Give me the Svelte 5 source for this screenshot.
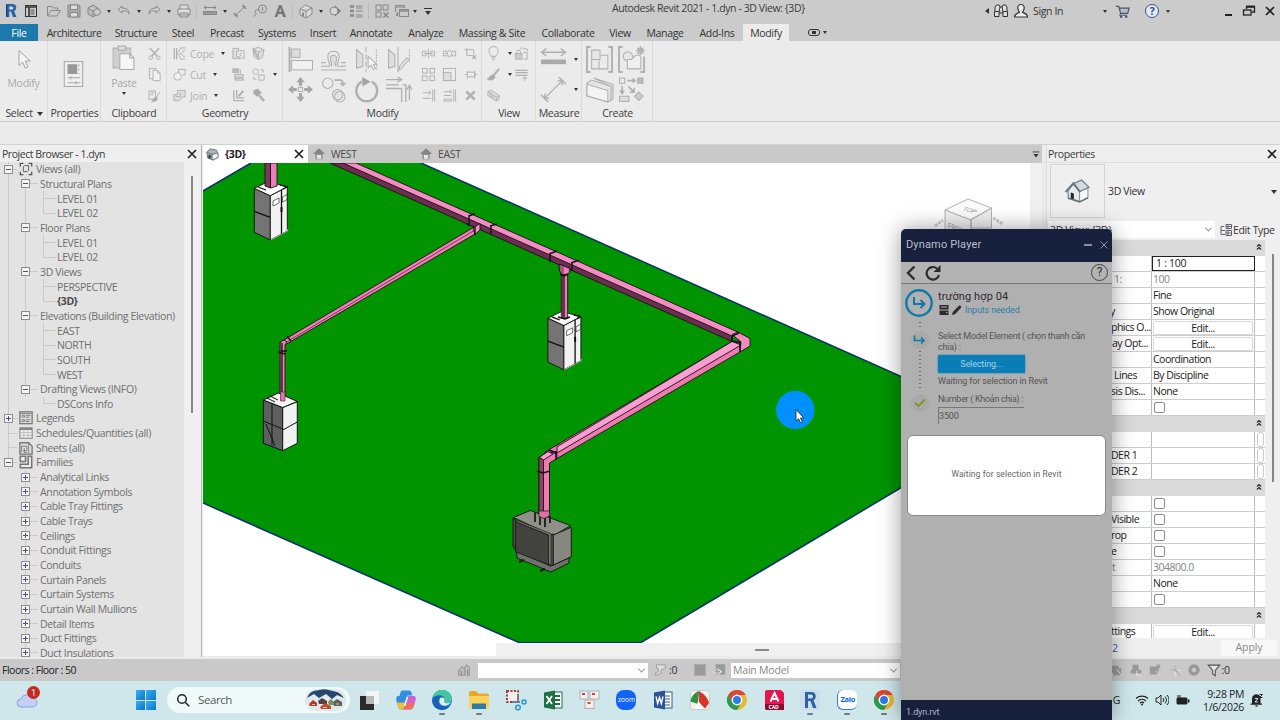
<script>
  const I = {
    // quick access
    revit: '<path d="M3 1h6.5a3.6 3.6 0 0 1 1.6 6.9L13.5 14H10L8 8.6H6.3V14H3z" fill="#2a63a8" stroke="none"/><path d="M6.3 3.4h2.5a1.4 1.4 0 0 1 0 3H6.3z" fill="#cbd9ea" stroke="none"/><path d="M3 1l1.2 2v11H3z" fill="#173f73" stroke="none"/>',
    home: '<rect x="2.5" y="2.5" width="11" height="11" stroke="#333"/><path d="M2.5 4h11M6 4v9" stroke="#333" stroke-width="1.6"/><path d="M7.5 7h4M7.5 9h4M7.5 11h4" stroke="#555"/>',
    open: '<path d="M1.500 13V3.500h4l1 1.500h5v2.500M1.500 13l3.500-5.500h9.500L11 13z"/>',
    save: '<path d="M2 2h11l1 1v11H2z" fill="#aaa"/><rect x="4.500" y="2" width="7" height="4.500" fill="#ddd"/><rect x="4.500" y="9.500" width="7" height="4.500" fill="#ddd"/>',
    sync: '<path d="M2 5l5-3 5 3v6l-5 3-5-3zM2 5l5 3 5-3M7 8v6" fill="#bbb"/><circle cx="11" cy="9" r="3.300" fill="#ccc"/>',
    undo: '<path d="M6 3L2 6.500 6 10V8c4-.5 6 0 7 3 .3-4-2-6-7-6z"/>',
    redo: '<path d="M10 3l4 3.500L10 10V8c-4-.5-6 0-7 3-.3-4 2-6 7-6z"/>',
    print: '<path d="M4 6V2h8v4M2 6h12v6H2zM4 10h8v4H4z" fill="#ddd"/>',
    ruler: '<path d="M2 4.500h12M4 2.800L2 4.500l2 1.700M12 2.800l2 1.700-2 1.700"/><rect x="1.500" y="8.500" width="13" height="3" fill="#999"/>',
    dim: '<path d="M3 13L13 3M1.500 10l4 4.500M10.500 1.500l4 4.500M3 13l.5-3M3 13l3-.5M13 3l-3 .5M13 3l-.5 3"/>',
    tag: '<circle cx="10.500" cy="6" r="4"/><path d="M10.500 4v4M6.500 7C3 6 2 9 4.500 11l-3 2.500"/>',
    text: '<path d="M2.500 14L7 2h2.500L14 14h-3l-1-3H6.200l-.9 3zM7 8.800h2.500L8.200 5z" fill="#777" stroke="none"/>',
    cube: '<path d="M2 6l5.500-4L14 5v6l-6 4-6-3zM2 6l6 2.500L14 5M8 8.500V15" fill="#dcdcdc"/><path d="M5 9.500v3.700" stroke-width="2"/>',
    section: '<path d="M8 2.500L14 8 8 13.500z" fill="#777" stroke="none"/><circle cx="7" cy="8" r="4" fill="#d5d5d5"/>',
    thin: '<path d="M2 3.500h4M2 8h4M2 12.500h4" stroke-width="2.400"/><path d="M8 3h6.500M8 5h6.500M8 8h6.500M8 12h6.500M8 14h6.500"/>',
    hid: '<rect x="2" y="2" width="5" height="5"/><rect x="9" y="2" width="5" height="5"/><rect x="2" y="9" width="5" height="5"/><path d="M9.500 9.500l5 5M14.500 9.500l-5 5" stroke-width="1.500"/>',
    win: '<path d="M1.500 9V2.500h9V5M1.500 4h9"/><rect x="5.500" y="6.500" width="9" height="7" fill="#ccc"/><path d="M5.500 8h9M3.500 9v4M1.800 11.500L3.500 13" stroke-width="1.300"/>',
    // small ribbon icons
    scissors: '<path d="M3 2l8 9M13 2L5 11" stroke-width="1.600"/><circle cx="4" cy="12.500" r="1.900"/><circle cx="12" cy="12.500" r="1.900"/>',
    copyp: '<path d="M2.500 1.500h7v11h-7z"/><path d="M6.500 3.500h4.500l3 3v8h-7.500z" fill="#f2f2f2"/><path d="M11 3.500v3h3"/>',
    brush: '<path d="M2 3h7v9H2zM3.500 5h4M3.500 7h3" /><path d="M14 4l-4 6M10 9.500c-3 0-3 4-5 4.500 3 1 6 0 6-3z" fill="#aaa"/>',
    cope: '<path d="M2.500 2v12M5 2v12" stroke-width="1.400"/><path d="M14 2H9C9 5 6 7 5 7.500M14 5h-2c0 3-4 3-4 3s3 0 4 3h2M14 14H9c0-3-2-5-4-6"/>',
    cut: '<path d="M7 6V2.500h7v6h-3"/><circle cx="6" cy="10" r="4" fill="#f2f2f2"/>',
    join: '<path d="M6 2.500h8v7h-3l-3 4H2V7h4z" fill="#ddd"/><path d="M4 9h5V5" />',
    g1: '<path d="M2 2.500h6v3H6v6h3v2H2z" fill="#ddd"/><path d="M9 5h5v8H9M9 9l3-2M9 9l3 2"/>',
    g2: '<path d="M2 3l6-1.500L14 4l-2 8-4 2.500-5-3zM2 3l6 3 6-2M8 6v8.500" fill="#ddd"/><path d="M3 4l4 8" stroke-width="2"/>',
    g3: '<rect x="2" y="2" width="6" height="4" fill="#bbb"/><path d="M4 8h9v3H4zM4 12h9v2H4zM10 3v4" fill="#ddd"/>',
    g4: '<circle cx="5" cy="5" r="3"/><rect x="8.500" y="8.500" width="5.500" height="5.500"/><path d="M10 3h3v3M3 10v3h3"/>',
    g5: '<path d="M3 2v12M6 2v9M3 13.500h11M6 10.500h8" stroke-width="1.300"/><path d="M13 3l-5 6" stroke-width="2"/>',
    hammer: '<path d="M3 3l4-2 4 4-4 4-4-3z" fill="#aaa"/><path d="M9 8l5 6" stroke-width="2.500"/>',
    m1: '<path d="M1.500 5.500h4v5h-4zM10.500 5.500h4v5h-4zM3 8h10M8 3v10" />',
    m2: '<path d="M1.500 5.500h4v5h-4zM10.500 5.500h4v5h-4zM7 4v2M9 4v2M7 10v2M9 10v2M3 8h3"/>',
    m3: '<path d="M4 2v8h6M1.500 4h10v6" /><path d="M10 10l4 4M14 10l-4 4" stroke-width="1.500"/>',
    m4: '<rect x="1.500" y="1.500" width="5" height="5"/><rect x="9.500" y="1.500" width="5" height="5"/><rect x="1.500" y="9.500" width="5" height="5"/><rect x="9.500" y="9.500" width="5" height="5"/>',
    m5: '<rect x="1.500" y="1.500" width="13" height="13"/><rect x="1.500" y="6" width="8" height="8.500" fill="#ddd"/>',
    m6: '<path d="M4.500 4v9M4.500 5.500h8v5h-8M12.500 4v8M2 8h2M13 8h2" />',
    m7: '<path d="M12.500 1.500v13M14.500 1.500v13M2 5h8M8 3l2.500 2L8 7M2 11h9"/>',
    m8: '<path d="M12.500 1.500v13M14.500 1.500v13M2 4h8M8 2.500l2 1.500-2 1.500M2 8h8M2 12h8v2H2z"/>',
    xx: '<path d="M3.500 3.500l9 9M12.500 3.500l-9 9" stroke-width="2.700"/>',
    bulb: '<path d="M5.500 11C5 8.500 3 8 3 5.500a5 5 0 0 1 10 0C13 8 11 8.500 10.500 11zM6 12.500h4M6.500 14.500h3"/>',
    v2: '<rect x="1.500" y="8" width="7" height="6" fill="#ccc"/><path d="M3 8V6.500a2 2 0 0 1 4 0V8M10 7h4v7h-4M6 4l2.500-2.500L11 4M11 3h3v3"/>',
    paint: '<path d="M14 2l-6 7" stroke-width="2.200"/><path d="M8 8.500C4 8 4 12 1.500 13c4 2 8 .5 8-3z" fill="#aaa"/>',
    v4: '<path d="M1.500 3.500h13M1.500 6h13M1.500 9h13" stroke-width="1.400"/><path d="M9 12h5M11.500 10v5"/>',
    v5: '<path d="M2 4l3-2 9 6v4l-3 2-9-6zM2 4l9 6v4M11 10l3-2M5 4.500v4l3 1.500" fill="#ddd"/>',
    // large ribbon icons (24)
    cursor: '<path d="M7 2.500v15l3.700-3.400 2.600 6 2.700-1.300-2.700-5.800h5z" fill="#f4f4f4" stroke="#a5a5a5"/>',
    props: '<rect x="3" y=".5" width="17" height="23" fill="#efefef" stroke="#aaa"/><rect x="6" y="3" width="9" height="9" fill="#979797" stroke="none"/><path d="M16.500 3v2M16.500 7v2M16.500 11v1M6 15.500h12M6 20h12M9 14v3M14 18.500v3" stroke="#aaa"/>',
    paste: '<path d="M2 3h17v19H2z" fill="#cfcfcf" stroke="#b5b5b5"/><path d="M7 1h7v4H7z" fill="#ddd"/><path d="M8.500 8.500H18l4 4v11H8.500z" fill="#f6f6f6"/><path d="M18 8.500v4h4"/>',
    align: '<path d="M1.500 0v24" stroke-width="2"/><rect x="3.500" y="2" width="8" height="8" fill="#ddd"/><rect x="3.500" y="13" width="20" height="9" fill="#f2f2f2"/>',
    offset: '<path d="M0 18.500h7.500c1 0 1-1 .5-3C5 8 7 4 12 4s7 4 4 11.500c-.5 2-.5 3 .5 3H24M0 22h24M0 15h4.500M19.500 15H24"/><path d="M9.500 18.500c2-2-1-5-.5-8 .5-3.500 5.500-3.500 6 0 .5 3-2.500 6-.5 8" fill="#ddd"/>',
    mir1: '<path d="M2.500 2.500l6 5v11l-6 2z" fill="#ddd"/><path d="M11.500 0v24" stroke-dasharray="5 2"/><path d="M21.500 2.500v19" stroke-dasharray="1.500 1"/><path d="M13.500 9v11l3-2.500 2 4 2-1-2-4h3.500z" fill="#f4f4f4"/>',
    mir2: '<path d="M2.500 2.500l6 5v11l-6 2z" fill="#ddd"/><path d="M11.500 0v24" /><path d="M22.500 2.500v13" stroke-dasharray="1.500 1"/><path d="M22 12l-7 8-2.500 2 .7-3.500L20 10.500z" fill="#eee"/>',
    move: '<path d="M12 0l4 5h-2.500v3.500h-3V5H8zM12 24l4-5h-2.500v-3.500h-3V19H8zM0 12l5-4v2.500h3.500v3H5V16zM24 12l-5-4v2.500h-3.500v3H19V16z" fill="#a5a5a5" stroke="none"/><rect x="10" y="10" width="4" height="4"/>',
    copy: '<circle cx="6.500" cy="6" r="5"/><circle cx="16" cy="17" r="5" fill="#e2e2e2"/><circle cx="18" cy="19" r="5"/><path d="M13 3h6c2 0 2 2 2 4M18.500 5.500L21 8l2.500-2.500" stroke-width="1.500"/>',
    rotate: '<path d="M7.500 4.500A10 10 0 1 0 17 4.500" stroke-width="2.400"/><path d="M8 0l8 4.500L8 9z" fill="#a5a5a5" stroke="none"/>',
    trim: '<path d="M0 7.500h12M0 11h15v13M19 24V7.500h-3M0 2.500h14M11 0l4 2.500L11 5M22.500 22V9M20 12l2.500-4L25 12" stroke-width="1.300"/>',
    meas: '<path d="M0 5h24M5 1.500L.5 5 5 8.500M19 1.500L23.500 5 19 8.500" stroke-width="1.400"/><rect x="0" y="12" width="24" height="4.500" fill="#aaa" stroke="none"/>',
    meas2: '<path d="M3 21L21 3M0 17l7 7M17 0l7 7M3 21l1-5M3 21l5-1M21 3l-5 1M21 3l-1 5" stroke-width="1.300"/>',
    cr1: '<path d="M3.500 0H0v24h3.500M20.500 0H24v24h-3.500" stroke-width="1.800"/><path d="M4.500 3h8v9h-8z" fill="#e6e6e6"/><path d="M13 8h7v13h-9M4.500 12v9h7v-8" />',
    cr2: '<path d="M3.500 0H0v24h3.500M20.500 24H24V9" stroke-width="1.800"/><circle cx="8.500" cy="9" r="4.500" fill="#e6e6e6"/><path d="M8 12h4l4-4h4l1 3v10H8z" fill="#eee"/><circle cx="20.500" cy="3.500" r="2.500"/><path d="M20.500 -1v9M16 3.500h9M17.500 .500l6 6M23.500 .500l-6 6"/>',
    cr3: '<path d="M6.500 1l18.500 6v14l-3 2V9z" fill="#ddd"/><path d="M0 6L4 3l19 6v13l-3 2L0 18z" fill="#e5e5e5"/><path d="M0 7l20 6v11L0 18z" fill="#f3f3f3"/>',
    cr4: '<rect x=".500" y="1" width="5" height="5"/><rect x="18" y="1" width="5" height="5" fill="#bbb"/><path d="M8 3.500h7M13 1.500l2.500 2-2.500 2M3 8.500v7M1 13l2 3 2-3M9 9l5 5M14.500 10.500v4h-4" stroke-width="1.500"/><rect x=".500" y="18.500" width="9" height="5" fill="#ddd"/><path d="M19 14.500l4 4-4 4-4-4z" fill="#ccc"/>',
    // tree
    views: '<path d="M1.500 5V1.500H5M11 1.500h3.500V5M14.500 11v3.500H11M5 14.500H1.500V11" stroke="#555" stroke-width="1.500"/><path d="M5 5.500l1.500-1.500H11v5.500L9.500 11H5z" stroke="#555"/>',
    legend: '<rect x="1" y="1" width="14" height="13.500" fill="#ddd" stroke="#777" stroke-width="1.500"/><path d="M3.500 5h3v2h-3zM3.500 10h3v2h-3zM8 5h5M8 7h4M8 10h5M8 12h4M2 3h12" stroke="#777"/>',
    sched: '<rect x="1" y="2" width="14" height="12" fill="#eee" stroke="#777"/><path d="M1 3.500h14" stroke="#777" stroke-width="2"/><path d="M1 7.500h14M1 10.700h14M5.500 4v10M10.300 4v10" stroke="#bbb"/>',
    sheet: '<path d="M1 2h10l4 4v9H1z" fill="#ddd" stroke="#777" stroke-width="1.500"/><path d="M11 2v12M3 13V6h6v5H5M6 8v5h3" stroke="#777"/>',
    fam: '<path d="M1.500 1.500h6v6h-6zM10.500 1.500h4v13h-13v-4h9z" fill="#eee" stroke="#777" stroke-width="1.800"/>',
    house: '<path d="M8 1.500L1 8h3v6h8V8h3z" fill="#858585" stroke="none"/><rect x="5.500" y="9" width="5" height="4.500" fill="#e6e6e6" stroke="none"/>',
    h3d: '<path d="M2 6l4-4 7 1.500L15 8v4l-6 3-6-2.500z" fill="#a9b2b6" stroke="#667076"/><path d="M2 6l6 2.500L15 7M8 8.500V15" stroke="#667076"/><rect x="4" y="9" width="2.500" height="4" fill="#333" stroke="none"/><path d="M9 9l5-1.500v4L9 14z" fill="#f4f4f4" stroke="none"/>',
    bighouse: '<path d="M3 11l5-6 6 6v10.500L3 18z" fill="#e4e9eb" stroke="#69757b"/><path d="M14 12l8-3.500V18l-8 4z" fill="#f8fafa" stroke="#8b969b"/><path d="M8 4.500L16 1l7 7-9 4z" fill="#d3dadd" stroke="#7a868c" stroke-width="1.300"/><path d="M.5 12.500L8 4l6.500 8.500" stroke="#69757b" stroke-width="1.800"/><path d="M5.500 13v6l3 1v-6z" fill="#23292c" stroke="none"/><path d="M3 18.500L14 22l8-4" stroke="#69757b" stroke-width="1.500"/>',
    // status
    st1: '<path d="M2 8l4-4 3 3v7H2zM8 6l3-4 3 3v9h-3M5 9v4M12 8v5" stroke="#888" fill="#bbb"/>',
    st2: '<path d="M4 2h10v4l-5 2v4l-6 2v-3l3-1V6H4z" fill="#ddd" stroke="#999"/>',
    st3: '<rect x="1.500" y="1.500" width="13" height="13" fill="#9b9b9b" stroke="none"/>',
    st4: '<path d="M4 1.500h11v12H5" fill="#9b9b9b" stroke="none"/><path d="M1 10h8M6 7l4 3-4 3" stroke="#eee" stroke-width="2"/><path d="M2 10h6M6 8l3 2-3 2" stroke="#888"/>',
    st5: '<path d="M2 3h9v3h3v8H5v-3H2z" fill="#999" stroke="none"/><path d="M9 7l5 7" stroke="#eee"/>',
    st5b: '<path d="M4 2h7v6h3v4H2V8h2z" fill="#999" stroke="none"/><path d="M9 9v5l2-1 3 2" stroke="#eee"/>',
    st5c: '<path d="M2 4h10v9H2z" fill="#999" stroke="none"/><path d="M10 2l4 4M14 2l-4 4" stroke="#999" stroke-width="1.500"/><path d="M9 9l4 5" stroke="#eee"/>',
    st6: '<path d="M8 1.500v13M1.500 8h13" stroke="#ddd" stroke-width="2"/><path d="M8 2v8M2 8h9M9 9l5 5" stroke="#999"/>',
    st7: '<circle cx="8" cy="8" r="4.500" stroke="#999" stroke-width="4"/>',
    filter: '<path d="M1.500 2.500h13L9.500 8.500v6l-3-2v-4z" fill="#e5e5e5" stroke="#555" stroke-width="1.300"/>',
    // title right
    bino: '<path d="M2 8V4l1.500-2H6l1 2h2l1-2h2.500L14 4v4M1.500 8.500h4.500v5H1.500zM10 8.500h4.500v5H10zM6 9l1-5M10 9L9 4M6 10h4" stroke="#333" fill="#ddd"/>',
    user: '<path d="M8 1.500c3 0 4 3 2.500 6l-1 2c2 .8 5 1 5 4.500H1.500c0-3.500 3-3.700 5-4.500l-1-2C4 4.500 5 1.500 8 1.500z" fill="#eee" stroke="#333" stroke-width="1.200"/>',
    cart: '<path d="M1 2.500h3L6 10h7.500L15 4.500H5" stroke="#4a5270" stroke-width="1.300" fill="#b9bccb"/><path d="M6 10l-1 2h8" stroke="#4a5270"/><circle cx="6.500" cy="13.500" r="1.300" fill="#4a5270" stroke="none"/><circle cx="12" cy="13.500" r="1.300" fill="#4a5270" stroke="none"/>',
    restore: '<path d="M5.500 6V3.500h8v5.500H11" stroke="#222" stroke-width="1.300"/><path d="M5.500 3.700h8" stroke="#222" stroke-width="2"/><rect x="2.500" y="7" width="7.500" height="5" stroke="#222" stroke-width="1.300"/>',
    close: '<path d="M4 4l8 8M12 4l-8 8" stroke="#222" stroke-width="1.700"/>',
    // taskbar (24)
    task: '<rect x="9" y="3" width="13" height="13" fill="#f2f5f5" stroke="none"/><path d="M3 8h6v8h8v6H3z" fill="#2b2b2b" stroke="none"/><rect x="9" y="8" width="8" height="8" fill="#b5b9ba" stroke="none"/>',
    copilot: '<path d="M8.500 2.500H15c1.500 0 2.200 1 2.600 2.300l.8 2.700h-5L9.500 21.500H7c-1.800 0-2.600-1.200-3-3L2.300 12c-.5-2.300.3-4 2.200-4h1L6.300 5c.4-1.700 1-2.500 2.200-2.500z" fill="#2f8fe0" stroke="none"/><path d="M3 14.500h8l-1.500 7H7c-1.800 0-2.600-1.200-3-3z" fill="#e6c43a" stroke="none"/><path d="M14.500 8h5c2 0 2.700 1.700 2.200 3.700L19.800 18c-.6 2.200-1.700 3.500-3.500 3.500H9.500L13 9.500c.3-1 .8-1.500 1.500-1.500z" fill="#cf62d3" stroke="none"/><path d="M11.500 15h9.200l-.9 3c-.6 2.200-1.700 3.500-3.500 3.500H9.500z" fill="#f0705a" stroke="none"/><path d="M13.500 9l-3 9" stroke="#e9f3f5" stroke-width="1.600"/>',
    edge: '<circle cx="12" cy="12" r="10" fill="#1678c8" stroke="none"/><path d="M2.500 9.500C4 4.500 8 2 12 2c6 0 10 4 10 8.500 0 3-2 4.700-5 4.700-2 0-3-.8-2.500-1.700C16 10 13 7 9 7.500c-3 .3-5 1-6.500 2z" fill="#46c5a0" stroke="none"/><path d="M9 10c-2 3 0 9 6 9 2 0 4-.6 5-1.400C18 21 14.500 22 12 22 7 22 2 18.500 2.300 12 4 8 10 6 13 9c-2-.5-3 0-4 1z" fill="#1b5fb4" stroke="none"/><path d="M9.500 14.500C8.500 10 12 8 14.500 11c.6 1-.6 2-.3 3 1 2 5 1.500 6.500.3-1 3-9 6-11.200.2z" fill="#dff1f3" stroke="none"/>',
    folder: '<path d="M2 5c0-1 .6-2 2-2h5l2 2.500h9c1.200 0 2 .8 2 2V20H2z" fill="#eaa924" stroke="none"/><path d="M2 8h20v11c0 1-.7 2-2 2H4c-1 0-2-1-2-2z" fill="#fbd25c" stroke="none"/><path d="M5 15.500h14V21H5z" fill="#2d7ba9" stroke="none"/>',
    snip: '<rect x="3" y="3" width="11" height="11" fill="#f5eeee" stroke="#a33c32" stroke-width="2" stroke-dasharray="2 1.500"/><path d="M14 6v9M8 14h8" stroke="#77808a" stroke-width="2"/><circle cx="14" cy="19.500" r="2.300" stroke="#2a98cf" stroke-width="1.500"/><circle cx="20" cy="14" r="2" stroke="#2a98cf" stroke-width="1.500"/>',
    excel: '<rect x="11" y="4" width="10" height="16" fill="#fff" stroke="#1f7145"/><path d="M13 8h6M13 12h6M13 16h6" stroke="#1f7145" stroke-width="2"/><path d="M3 4.500L14 2.500v19L3 19.500z" fill="#1f7145" stroke="none"/><path d="M5.500 8l5.500 8M11 8l-5.500 8" stroke="#fff" stroke-width="1.800"/>',
    keys: '<g fill="#f4f0ef" stroke="#b7aeb0"><rect x="2" y="3" width="8" height="8"/><rect x="12" y="3" width="9" height="8"/><rect x="7" y="12" width="9" height="8.500"/></g><path d="M4 6h3M14 6h3M9.500 15h3" stroke="#d0453e" stroke-width="2"/>',
    word: '<rect x="11" y="4" width="10" height="16" fill="#fff" stroke="#2a5699"/><path d="M14 8h5M14 11h5M14 14h5M14 17h5" stroke="#2a5699"/><path d="M3 4.500L14 2.500v19L3 19.500z" fill="#2a5699" stroke="none"/><path d="M5 8.500l1.700 7 1.800-6 1.800 6 1.700-7" stroke="#fff" stroke-width="1.400"/>',
    arrows: '<rect x="2.500" y="2.500" width="19" height="19" rx="3" fill="#f5f2ea" stroke="#ccc"/><path d="M11 3C6 5 3 9 2.500 13.500L10 16z" fill="#2c9142" stroke="none"/><path d="M11 3c5 3 9 7 10 12l-4 5.500L11 14z" fill="#d9332a" stroke="none"/><path d="M10 13l5 8H8z" fill="#fff" stroke="none"/>',
    chrome: '<circle cx="12" cy="12" r="10" fill="#e8b92e" stroke="none"/><path d="M3.300 7A10 10 0 0 1 20.700 7H12l-4.300 7.500z" fill="#dc4437" stroke="none"/><path d="M3.300 7A10 10 0 0 0 12 22l4.300-7.500L7.700 14.500z" fill="#2a9a50" stroke="none"/><circle cx="12" cy="12" r="4.700" fill="#2c7be5" stroke="#fff" stroke-width="1.500"/>',
    autocad: '<path d="M5 2h14l3 3v17H5c-1 0-2-1-2-2V4c0-1 1-2 2-2z" fill="#e3174f" stroke="none"/><path d="M3 16h19v6H5c-1 0-2-1-2-2z" fill="#8a0c30" stroke="none"/><path d="M8.500 13.500L12.500 5l4 8.500M10 11h5" stroke="#fff" stroke-width="2"/>',
    revitb: '<rect x="2" y="2" width="20" height="20" fill="#cbdcef" stroke="none"/><path d="M7 4h7a4.300 4.300 0 0 1 1.500 8L18.500 20H15l-2.500-7H10v7H7z" fill="#2b61a3" stroke="none"/><path d="M10 6.500h3a1.800 1.800 0 0 1 0 4h-3z" fill="#cbdcef" stroke="none"/>',
  };

  const D = 'dd';
  const quick = [['revit',3],['home',4],['open',7],['save',4],['sync',4],[D,4],['undo',4],[D,4],['redo',4],[D,4],['print',4],['sep',4],['ruler',5],[D,4],['dim',4],['tag',4],['text',4],['sep',4],['cube',5],[D,4],['section',3],['thin',5],['sep',4],['hid',5],['win',4],[D,2],['more',6]];
  const tabs = [['File',38],['Architecture',72],['Structure',52],['Steel',42],['Precast',46],['Systems',54],['Insert',38],['Annotate',58],['Analyze',52],['Massing & Site',80],['Collaborate',72],['View',32],['Manage',58],['Add-Ins',46],['Modify',52]];

  // a column: width, big = two large rows instead of three small, rows [icon, label, arrow]
  const panels = [
    { name: 'Geometry', w: 116, pad: 5, cols: [
      { w: 59, rows: [['cope','Cope',1],['cut','Cut',1],['join','Join',1]] },
      { w: 20, rows: [['g1'],['g3'],['g5']] },
      { w: 30, rows: [['g2'],['g4','',1],['hammer']] } ] },
    { name: 'Modify', w: 199, pad: 5, cols: [
      { w: 33, big: 1, rows: [['align'],['move']] },
      { w: 33, big: 1, rows: [['offset'],['copy']] },
      { w: 32, big: 1, rows: [['mir1'],['rotate']] },
      { w: 35, big: 1, rows: [['mir2'],['trim']] },
      { w: 21, rows: [['m1'],['m4'],['m7']] },
      { w: 21, rows: [['m2'],['m5'],['m8']] },
      { w: 20, rows: [['m3'],['m6'],['xx']] } ] },
    { name: 'View', w: 54, pad: 4, cols: [
      { w: 28, rows: [['bulb','',1],['paint','',1],['v5']] },
      { w: 20, rows: [['v2'],['v4']] } ] },
    { name: 'Measure', w: 46, pad: 5, cols: [ { w: 40, big: 1, rows: [['meas','',1],['meas2','',1]] } ] },
    { name: 'Create', w: 71, pad: 5, cols: [
      { w: 32, big: 1, rows: [['cr1'],['cr3']] },
      { w: 32, big: 1, rows: [['cr2'],['cr4']] } ] },
  ];

  // tree rows: depth, label, state, icon / last-child flag
  const tree = [
    [0,'Views (all)','-','views'],
    [1,'Structural Plans','-'],[2,'LEVEL 01'],[2,'LEVEL 02','',1],
    [1,'Floor Plans','-'],[2,'LEVEL 01'],[2,'LEVEL 02','',1],
    [1,'3D Views','-'],[2,'PERSPECTIVE'],[2,'{3D}','',1],
    [1,'Elevations (Building Elevation)','-'],[2,'EAST'],[2,'NORTH'],[2,'SOUTH'],[2,'WEST','',1],
    [1,'Drafting Views (INFO)','-',1],[2,'DSCons Info','',1],
    [0,'Legends','+','legend'],[0,'Schedules/Quantities (all)','','sched'],[0,'Sheets (all)','','sheet'],[0,'Families','-','fam'],
    ...['Analytical Links','Annotation Symbols','Cable Tray Fittings','Cable Trays','Ceilings','Conduit Fittings','Conduits','Curtain Panels','Curtain Systems','Curtain Wall Mullions','Detail Items','Duct Fittings','Duct Insulations'].map((t) => [1, t, '+']),
  ];

  // property rows: label tail, left offset, kind, value
  const props = [
    ['cat'],
    ['',0,'sel','1 : 100'],['1:',67,'dim','100'],['',0,'val','Fine'],['y',63,'val','Show Original'],
    ['phics O...',64,'edit','Edit...'],['ay Opt...',65,'edit','Edit...'],['',0,'val','Coordination'],['Lines',67,'val','By Discipline'],['sis Dis...',64,'val','None'],['',0,'chk'],
    ['cat'],['',0,'ext'],['DER 1',64,'ext'],['DER 2',64,'ext'],
    ['cat'],['',0,'chk'],['Visible',64,'chk'],['rop',64,'chk'],['e',64,'chk'],['t',65,'dim','304800.0'],['',0,'val','None'],['',0,'chk'],
    ['cat'],['ttings',64,'edit','Edit...'],
  ];

  const apps = [['task'],['copilot'],['edge',1],['folder',1],['snip'],['excel'],['keys'],['zoom'],['word'],['arrows'],['chrome'],['autocad'],['revitb',1],['zalo',1],['chrome',1]];
</script>

{#snippet ic(name, n = 16, v = 16)}
  <svg class="ic" width={n} height={n} viewBox="0 0 {v} {v}" fill="none" stroke="currentColor">{@html I[name]}</svg>
{/snippet}

{#snippet cabinet()}
  <g stroke="#111" stroke-width=".9" stroke-linejoin="round">
    <path d="M254.300 188.300L270.300 195.700V240L254.300 232.300z" fill="#747474" />
    <path d="M270.300 195.700L287.300 186.700V231L270.300 240z" fill="#f2f2f2" />
    <path d="M254.300 188.300L268 181.700L287.300 186.700L270.300 195.700z" fill="#fafafa" />
    <path d="M258 187l8 3M280 185l7 2-4 2M254.300 211.300l16 6M281.500 190v45" fill="none" stroke-width="1.300" />
    <path d="M273 201l6-3v5l-6 3zM282.500 197l4.500-2.500v5l-4.500 2.500z" fill="#fff" stroke-width=".6" />
    <path d="M281.500 207v5" stroke-width="2" />
    <path d="M270.700 240l17-9v-2" stroke="#ccc" stroke-width=".8" fill="none" />
  </g>
{/snippet}

<div class="app">
  <header class="title">
    {#each quick as [n, g]}
      {#if n === 'dd'}<i class="dd" style="margin-left:{g}px"></i>
      {:else if n === 'sep'}<i class="vsep" style="margin-left:{g}px"></i>
      {:else if n === 'more'}<i class="more" style="margin-left:{g}px"></i>
      {:else}<span class="q" style="margin-left:{g}px">{@render ic(n, 16)}</span>{/if}
    {/each}
    <span class="name">Autodesk Revit 2021 - 1.dyn - 3D View: {'{3D}'}</span>
    <div class="tools">
      <i class="la"></i>
      <span class="bino">{@render ic('bino')}</span>
      <span class="user">{@render ic('user')}</span>
      <span class="sign">Sign In</span>
      <i class="dd a1"></i>
      <span class="cart">{@render ic('cart', 15)}</span>
      <span class="help">?</span>
      <i class="dd a2"></i>
      <i class="min"></i>
      <span class="res">{@render ic('restore')}</span>
      <span class="cls">{@render ic('close')}</span>
    </div>
  </header>

  <nav class="tabs">
    {#each tabs as [t, w]}
      <span class="tab" class:file={t === 'File'} class:on={t === 'Modify'} style="width:{w}px">{t}</span>
    {/each}
    <span class="pill"><i></i></span><i class="dd"></i>
  </nav>

  <section class="ribbon">
    <div class="panel sel-p">
      <div class="one">{@render ic('cursor', 24, 24)}<span>Modify</span></div>
      <div class="pname">Select <i class="dd wide"></i></div>
    </div>
    <div class="panel pr">
      <div class="one mid">{@render ic('props', 26, 24)}</div>
      <div class="pname">Properties</div>
    </div>
    <div class="panel clip">
      <div class="two">
        <div class="one paste">{@render ic('paste', 26, 25)}<span>Paste</span><i class="dd"></i></div>
        <div class="col">
          <div class="r">{@render ic('scissors', 15)}</div><div class="r">{@render ic('copyp', 15)}</div><div class="r">{@render ic('brush', 15)}</div>
        </div>
      </div>
      <div class="pname">Clipboard</div>
    </div>
    {#each panels as p}
      <div class="panel" style="width:{p.w}px">
        <div class="two" style="padding-left:{p.pad}px">
          {#each p.cols as c}
            <div class="col" class:big={c.big} style="width:{c.w}px">
              {#each c.rows as [n, label, arrow]}
                <div class="r">
                  {@render ic(n, c.big ? 25 : 15, c.big ? 24 : 16)}
                  {#if label}<span>{label}</span>{/if}
                  {#if arrow}<i class="dd"></i>{/if}
                </div>
              {/each}
            </div>
          {/each}
        </div>
        <div class="pname">{p.name}</div>
      </div>
    {/each}
  </section>
  <div class="options"></div>

  <main class="work">
    <aside class="browser">
      <div class="head">Project Browser - 1.dyn {@render ic('close', 16)}</div>
      <div class="treebox">
        <div class="tree">
          {#each tree as [d, t, s, x], i}
            <div class="row" class:last={x === 1} class:under={d > 0 && i > 20} class:nog={i === 16}>
              {#if d === 0}
                <span class="g g0">{#if s}<b class="pm" class:plus={s === '+'}></b>{/if}</span>
                <span class="ticon">{@render ic(x, 14)}</span>
              {:else if d === 1}
                <span class="g ga"></span><span class="g g1"><b class="pm" class:plus={s === '+'}></b></span>
              {:else}
                <span class="g ga"></span><span class="g gb"></span><span class="g g2"></span>
              {/if}
              <span class="t" class:strong={t === '{3D}'}>{t}</span>
            </div>
          {/each}
        </div>
        <div class="track"><i></i></div>
      </div>
    </aside>

    <section class="center">
      <div class="vtabs">
        <div class="vt on">{@render ic('h3d', 14)}<b>{'{3D}'}</b>{@render ic('close', 16)}</div>
        <div class="vt">{@render ic('house', 14)}<span>WEST</span></div>
        <div class="vt">{@render ic('house', 14)}<span>EAST</span></div>
        <i class="more"></i>
      </div>
      <div class="canvas">
        <svg class="scene" width="827" height="480" viewBox="203 163 827 480">
          <path d="M203 191L251 163H421L1008 424L641 642.500H519L203 503z" fill="#009400" />
          <path d="M203 191L251 163M421 163L1008 424L641 642.500H519L203 503" fill="none" stroke="#0b3566" stroke-width="1.600" />
          <g stroke="#1d0d16" stroke-width=".9" stroke-linejoin="round">
            {@render cabinet()}
            <path d="M265 163V186l5.500 2V163z" fill="#7a3a5c" /><path d="M270.500 163V188l6.500-2V163z" fill="#e87fb5" />
            <path d="M330 163L346 163 732 335V341.500z" fill="#6b3050" />
            <path d="M343 163H356L740 333 732 336z" fill="#f48cc6" />
            <path d="M732 334.500L738 332 750 338.500V346L740 352 741 342z" fill="#f08bc0" />
            <path d="M740 341L732 341.500 545 452V457.500L557 458.500 740 352z" fill="#ee7ab0" />
            <path d="M732 341.500L557 446.700V453L741 345z" fill="#f79fd2" />
            <path d="M539 457.500L548 451.500 557 454V458.500L549.500 463V516L543.500 518 539 514z" fill="#ee7ab0" />
            <path d="M539 457.500L548 451.500 553 454 543.500 460z" fill="#f79fd2" />
            <path d="M539 457.500L543.500 460V518L539 514z" fill="#8c4568" />
            <path d="M475 226.500L284 340v5.500L475 234z" fill="#ee82b8" />
            <path d="M475 230L285 343" stroke="#7c2e56" />
            <path d="M473 228L480 223.500V230L475 234.500z" fill="#f28fc4" />
            <path d="M280 342l4-2 3 2-2 3V401h-5z" fill="#ea86b6" /><path d="M280 342l3 1V401h-3z" fill="#6b3050" stroke="none" />
            <path d="M559 264L570 268V272L567 275H562L559.500 271z" fill="#a0567e" />
            <path d="M564 267l4.500 2v4l-4.500 1z" fill="#ee82b8" stroke="none" />
            <g transform="translate(293.600 129.800)">{@render cabinet()}</g>
            <path d="M561.300 275V318h6.400V275z" fill="#e67fb2" /><path d="M562 275V318h3V275z" fill="#6b3050" stroke="none" />
          </g>
          <g fill="none" stroke="#151015" stroke-width="1.400">
            <path d="M469 215v9M467 224l3 2M469 216l6-2.500M491 226v9M490 226l7-2M475 227v8M550 253v9M549 254l8-3M572 262v9M571 263l8-3M560 274l4 2 4-2M732 335v6l8 2M740 341v11M732 336l7-3M281 351l6 0M278 352l7 2M287 336l4 5M537 471l6 2 7-2M556 451v9M549 450l8 3M558 317l7 2 5-2" />
          </g>
          <g stroke="#111" stroke-width="1">
            <path d="M263.300 400l19.400 7.500v43.200l-19.400-7.400z" fill="#5f5f5f" />
            <path d="M282.700 407.500l14.600-5.800v41.600l-14.600 7.400z" fill="#f2f2f2" />
            <path d="M263.300 400l15-7 19 8.500-14.600 6z" fill="#f6f6f6" />
            <path d="M272 403.500v43M263.300 421l19.400 8M282.700 430l14.600-8M266 424l9 22M267 398l8 4M270 396l8 4" fill="none" />
            <path d="M280.500 392v9h4.500v-9z" fill="#df76a8" stroke="#5a2a44" stroke-width=".7" />
          </g>
          <g stroke="#1b1b18" stroke-width="1" stroke-linejoin="round">
            <path d="M516.500 551l34 15 18.500-8v5l-18 9-34-14z" fill="#6f716a" />
            <path d="M513.300 517.500l17-7 40.200 15-17 10.500z" fill="#8f9188" />
            <path d="M513 518l3 2v31l-3-5zM549 535l5-1v31l-5 1z" fill="#4d4f49" />
            <path d="M515.700 521.700l32.800 13.500V564.500l-32.800-12.800z" fill="#42433f" />
            <path d="M515.700 521.700l2.500-1 32.800 13v30l-2.500.800V535z" fill="#75776e" stroke-width=".6" />
            <path d="M515.700 521.700l32.800 13.500V564.500l-32.800-12.800z" fill="#42433f" stroke-width=".6" />
            <path d="M553.300 535l18-7.700v29.400l-18 8.300z" fill="#86887f" />
            <path d="M519 562l5-2M540 571l5-2" stroke-width="2" />
            <path d="M535 513v9M540 517v8M545 518v9M550 516v7" stroke-width="1.800" />
            <path d="M539 511h10.500v5l-5.500 2.500-5-2z" fill="#e06fa5" stroke-width=".7" />
          </g>
          <g stroke="#aaa" fill="#fbfbfb" stroke-width=".9">
            <path d="M935 226l8-6M993 218l10 6" fill="none" stroke-dasharray="3 1" stroke-width="3" stroke="#ccc" />
            <path d="M945 210l23-11 23.500 9-21.500 12z" /><path d="M945 210l26 10v16h-26zM971 220l20.500-12v20H971z" fill="#efefef" />
          </g>
          <text class="cubetxt" transform="matrix(.8 .25 -.6 .6 962 210)">TOP</text>
          <text class="cubetxt" transform="matrix(.75 .3 0 1 948 228)">FRONT</text>
          <circle cx="795.300" cy="410" r="19.200" fill="#0090ff" />
          <path d="M796 409.500v11.500l2.600-2.300 1.800 4 1.900-.9-1.800-3.800h3.400z" fill="#fff" stroke="#222" stroke-width=".8" />
        </svg>
        <div class="vbar"></div>
      </div>
      <div class="hbar"><i></i></div>
    </section>

    <aside class="properties">
      <div class="head">Properties {@render ic('close', 16)}</div>
      <div class="type">
        <div class="thumb">{@render ic('bighouse', 25, 24)}</div><span>3D View</span><i class="dd wide"></i>
      </div>
      <div class="inst">
        <div class="combo"><span>3D View: {'{3D}'}</span><i class="chev"></i></div>
        <svg width="12" height="12" viewBox="0 0 12 12" fill="none" stroke="#667"><path d="M4 2.500H1v8h4M1 6.500h4M6 .500h5.500v4H6zM6 6.500h5.500v5H6zM8 .500v4M8 6.500v5M6 9h5.500M6 2.500h5.500" /></svg>
        <span class="et">Edit Type</span>
      </div>
      <div class="gridbox">
        <div class="grid">
          {#each props as [l, off, k, v]}
            {#if l === 'cat'}<div class="cat"><svg width="6" height="8" viewBox="0 0 6 8" fill="none" stroke="#222" stroke-width="1.200"><path d="M1 3.500l2-2 2 2M1 6.500l2-2 2 2" /></svg></div>
            {:else}
              <div class="prow">
                <span class="pl" class:dim={k === 'dim'} style="padding-left:{off}px">{l}</span>
                <span class="pv {k}">{#if k === 'chk'}<i></i>{:else if k === 'edit'}<b>{v}</b>{:else}{v ?? ''}{/if}</span>
                <span class="px">{#if k === 'ext'}<i></i>{/if}</span>
              </div>
            {/if}
          {/each}
        </div>
        <div class="ptrack"><i></i></div>
      </div>
      <div class="foot"><span class="two2">2</span><span class="apply">Apply</span></div>
    </aside>
  </main>

  <footer class="status">
    <span class="msg">Floors : Floor : 50</span>
    {@render ic('st1', 14)}
    <div class="scombo c1"><i class="chev"></i></div>
    <span class="s2">{@render ic('st2', 14)}</span><span class="zero">:0</span>
    <span class="s3">{@render ic('st3', 14)}</span><span class="s4">{@render ic('st4', 14)}</span>
    <div class="scombo c2">Main Model<i class="chev"></i></div>
    <div class="sr">
      {@render ic('st5', 14)}{@render ic('st5b', 14)}{@render ic('st5c', 14)}{@render ic('st6', 14)}{@render ic('st7', 14)}{@render ic('filter', 14)}
    </div>
    <span class="zero z2">:0</span>
  </footer>

  <div class="taskbar">
    <div class="weather">
      <svg width="24" height="26" viewBox="0 0 24 26"><path d="M5 20a4 4 0 0 1 0-8 6 6 0 0 1 11-1 4.500 4.500 0 0 1 1 9z" fill="#c3d0f4" stroke="#8fa3dd" /></svg>
      <b>1</b>
    </div>
    <div class="win"><i></i><i></i><i></i><i></i></div>
    <div class="search">
      <svg width="14" height="14" viewBox="0 0 14 14" fill="none" stroke="#222" stroke-width="1.500"><circle cx="6" cy="6" r="4.300" /><path d="M9.200 9.200l4 4" /></svg>
      <span>Search</span>
      <svg class="art" width="41" height="22" viewBox="0 0 41 22"><rect width="41" height="22" rx="11" fill="#dfe9ea" /><path d="M2 9C6 0 12 2 14 1c6-2 10 0 14 1 6 1 9 4 11 7l-7-3-5 4-6-5-7 4-5-4z" fill="#27476e" /><path d="M4 15l4-4 4 3v3H5z" fill="#a83e34" /><path d="M13 12l4-3 5 3v3h-8z" fill="#50464a" /><path d="M15 18l5-4 6 3v3H16z" fill="#c14b39" /><path d="M28 13l4-3 5 3v4h-8z" fill="#5b6560" /><path d="M23 13l3-3 3 3v3h-5z" fill="#7b8b62" /><path d="M7 15.500h3M18 18.500h4M31 15h3" stroke="#f0c765" /></svg>
    </div>
    <div class="apps">
      {#each apps as [n, run]}
        <div class="app1" class:run>
          {#if n === 'zoom'}<span class="zoomi">zoom</span>
          {:else if n === 'zalo'}<span class="zaloi">Zalo</span>
          {:else}{@render ic(n, 24, 24)}{/if}
          {#if n === 'autocad'}<span class="cad">CAD</span>{/if}
        </div>
      {/each}
    </div>
    <div class="tray">
      <span class="lang">G</span>
      <svg width="14" height="12" viewBox="0 0 14 12" fill="none" stroke="#222" stroke-width="1.200"><path d="M1 4.500a9 9 0 0 1 12 0M3 7a6 6 0 0 1 8 0M5 9a3 3 0 0 1 4 0" /><circle cx="7" cy="10.500" r="1" fill="#222" stroke="none" /></svg>
      <svg width="14" height="12" viewBox="0 0 14 12" fill="none" stroke="#222"><path d="M1 4h2l3-3v10L3 8H1zM8 4a3 3 0 0 1 0 4M10 2.500a5 5 0 0 1 0 7M12 1a7 7 0 0 1 0 10" /></svg>
      <svg width="15" height="12" viewBox="0 0 15 12"><rect x="1.500" y="3.500" width="11" height="7" rx="1.500" fill="#222" /><rect x="13" y="5.500" width="1.500" height="3" fill="#222" /><path d="M3 1v4h2V1" stroke="#222" fill="none" /></svg>
      <div class="clock"><span>9:28 PM</span><span>1/6/2026</span></div>
      <svg width="13" height="14" viewBox="0 0 13 14"><path d="M2 11V6c0-6 8-6 8.500-1V11zM.5 10.500h11.500v1.200H.500zM4.500 12.500h4l-2 1.500z" fill="#222" /><path d="M5 5.500h3L5 9h3" stroke="#d0e8ec" fill="none" /><path d="M9.500 1.500h3l-3 3h3" stroke="#222" fill="none" /></svg>
    </div>
  </div>

  <div class="player">
    <div class="ph"><span>Dynamo Player</span><i class="pmin"></i><svg width="10" height="10" viewBox="0 0 10 10" stroke="#8f9ab0"><path d="M1.500 1.500l7 7M8.500 1.500l-7 7" /></svg></div>
    <div class="pt">
      <svg width="12" height="16" viewBox="0 0 12 16" fill="none" stroke="#2b2b2b" stroke-width="2.400"><path d="M9.500 1.500L3 8l6.500 6.500" /></svg>
      <svg class="reload" width="18" height="16" viewBox="0 0 18 16" fill="none"><path d="M13 3.500A6.300 6.300 0 1 0 15 10" stroke="#2b2b2b" stroke-width="2.200" /><path d="M16.500 0v7h-7z" fill="#2b2b2b" /></svg>
      <span class="pq">?</span>
    </div>
    <div class="script">
      <svg width="28" height="28" viewBox="0 0 28 28" fill="none" stroke="#0f78ad" stroke-width="2.400"><circle cx="14" cy="14" r="12.700" /><path d="M9 8v7h10M15.500 11l4 4-4 4" stroke-width="2" /></svg>
      <div class="sinfo">
        <div class="sname">trường hợp 04</div>
        <div class="sneed">
          <svg width="10" height="10" viewBox="0 0 10 10"><path d="M.5 0h9v4.500h-9zM.5 5.500h9V10h-9z" fill="#2b2b2b" /><path d="M2 2h6M7 7.700h1.500" stroke="#b0b0b0" /></svg>
          <svg width="10" height="10" viewBox="0 0 10 10"><path d="M0 10l.8-3L7 .8c1-1 3 1 2 2L3 9.200z" fill="#2b2b2b" /></svg>
          <span>Inputs needed</span>
        </div>
      </div>
    </div>
    <div class="steps">
      <div class="rail">
        <i class="dots a"></i>
        <span class="node"><svg width="13" height="12" viewBox="0 0 13 12" fill="none" stroke="#0f78ad" stroke-width="1.700"><path d="M1.500 1.500v5h9.500M8 3.500l3 3-3 3" /></svg></span>
        <i class="dots b"></i>
        <span class="node n2"><svg width="12" height="10" viewBox="0 0 12 10" fill="none" stroke="#85902c" stroke-width="1.900"><path d="M1 5l3.500 3L11 1.500" /></svg></span>
      </div>
      <div class="fields">
        <p class="q1">Select Model Element ( chọn thanh cần<br />chia) :</p>
        <div class="act">Selecting...</div>
        <p class="w">Waiting for selection in Revit</p>
        <p class="q2">Number ( Khoản chia) :</p>
        <div class="input">3500</div>
      </div>
    </div>
    <div class="toast">Waiting for selection in Revit</div>
    <div class="pf">1.dyn.rvt</div>
  </div>
</div>

<style>
  :global(body) { margin: 0; }
  .app { position: relative; width: 1280px; height: 720px; overflow: hidden; display: flex; flex-direction: column; background: #ebebeb; color: #333; font: 10.5px/14px "Open Sans", "Noto Sans", sans-serif; letter-spacing: -0.35px; white-space: nowrap; }
  .app * { box-sizing: border-box; }
  .ic { display: block; flex: none; overflow: visible; }
  i { font-style: normal; flex: none; }
  .dd { display: block; width: 6px; height: 3px; position: relative; }
  .dd::before { content: ""; display: block; margin: 0 auto; width: 0; border: 2px solid transparent; border-top: 3px solid #333; border-bottom: 0; }
  .dd.wide::before { border-width: 3px; border-top-width: 4px; border-bottom: 0; }
  .more { width: 8px; height: 7px; border-top: 1.500px solid #333; display: flex; justify-content: center; align-items: flex-end; }
  .more::before { content: ""; border: 3.500px solid transparent; border-top: 4px solid #333; border-bottom: 0; }

  .title { height: 24px; flex: none; display: flex; align-items: center; background: #cbcbcb; padding-bottom: 2px; }
  .q { color: #888; flex: none; }
  .q .ic { width: 16px; }
  .vsep { width: 1px; height: 16px; background: #bcbcbc; }
  .name { margin-left: 180px; width: 200px; padding-bottom: 6px; color: #3c3c3c; letter-spacing: -0.41px; }
  .tools { display: flex; align-items: center; margin-left: 173px; }
  .la { border: 3px solid transparent; border-right: 4px solid #333; border-left: 0; }
  .bino { margin-left: 4px; } .user { margin-left: 4px; }
  .sign { margin-left: 4px; width: 36px; }
  .a1 { margin-left: 33px; } .cart { margin-left: 7px; }
  .help { margin-left: 15px; width: 14px; height: 14px; border: 1.300px solid #3a4f87; border-radius: 50%; background: #e6eaf2; color: #2a4a9a; font-weight: 700; line-height: 12px; text-align: center; }
  .a2 { margin-left: 6px; } .min { margin-left: 54px; width: 7px; height: 2px; background: #222; margin-top: 7px; }
  .res { margin-left: 9px; } .cls { margin-left: 5px; }

  .tabs { height: 17px; flex: none; display: flex; align-items: center; background: #cbcbcb; letter-spacing: -0.33px; }
  .tab { height: 17px; line-height: 18px; text-align: center; flex: none; }
  .tab:nth-child(2) { letter-spacing: -0.45px; }
  .tab.file { background: #1d78ac; color: #fff; }
  .tab.on { background: linear-gradient(#ebebeb, #ebebeb) no-repeat 3px 0 / 46px 17px; }
  .pill { width: 12px; height: 7px; border: 1px solid #333; border-radius: 3px; margin: 0 2px 0 16px; display: grid; place-items: center; }
  .pill i { width: 4px; height: 3px; background: #333; }

  .ribbon { height: 81px; flex: none; display: flex; background: #ebebeb; border-bottom: 1px solid #cfcfcf; color: #b0b0b0; letter-spacing: -0.25px; }
  .panel { flex: none; display: flex; flex-direction: column; border-right: 1px solid #dadada; }
  .panel.sel-p { width: 48px; } .panel.pr { width: 53px; } .panel.clip { width: 66px; }
  .pname { height: 15px; line-height: 15px; color: #3d3d3d; display: flex; justify-content: center; align-items: center; gap: 4px; padding: 0 0 0 1px; letter-spacing: -0.3px; }
  .two { flex: 1; display: flex; padding-top: 2px; }
  .one { flex: 1; display: flex; flex-direction: column; align-items: center; padding-top: 7px; gap: 4px; color: #a9a9a9; }
  .one.mid { padding-top: 20px; }
  .one.paste { flex: none; width: 46px; padding-top: 2px; gap: 1px; } .paste span { margin-top: 4px; } .paste .dd { margin-top: 1px; }
  .col { display: flex; flex-direction: column; flex: none; }
  .r { height: 21px; display: flex; align-items: center; gap: 2px; }
  .r span { margin-left: 1px; }
  .r .dd { margin-left: 4px; }
  .col.big { padding-top: 1px; } .col.big .r { height: 30px; } .col.big .r .dd { margin-left: 5px; }
  .options { height: 22px; flex: none; background: #ebebeb; }

  .work { height: 515px; flex: none; display: flex; border-top: 1px solid #d2d2d2; }
  .browser { width: 202px; flex: none; border-right: 1px solid #b5b5b5; display: flex; flex-direction: column; background: #efefef; height: 512px; }
  .head { height: 17px; flex: none; display: flex; justify-content: space-between; align-items: center; padding-left: 2px; padding-right: 2px; color: #3a3a3a; }
  .browser .head { letter-spacing: -0.45px; padding-right: 1px; }
  .treebox { flex: 1; overflow: hidden; display: flex; }
  .tree { width: 184px; background: #e3e3e3; flex: none; color: #6f6f6f; }
  .row { height: 14.664px; display: flex; align-items: center; }
  .g { align-self: stretch; flex: none; display: flex; align-items: center; }
  .g0 { width: 19px; padding-left: 4px; background: linear-gradient(#c9c9c9, #c9c9c9) 8px 0 / 1px 100% no-repeat, linear-gradient(#c9c9c9, #c9c9c9) 8px 50% / 9px 1px no-repeat; }
  .ticon { width: 17px; display: flex; }
  .ga { width: 21px; background: linear-gradient(#c9c9c9, #c9c9c9) 8px 0 / 1px 100% no-repeat; }
  .under .ga { background: none; }
  .g1 { width: 19px; background: linear-gradient(#c9c9c9, #c9c9c9) 4px 0 / 1px 100% no-repeat, linear-gradient(#c9c9c9, #c9c9c9) 4px 50% / 13px 1px no-repeat; }
  .gb { width: 19px; background: linear-gradient(#c9c9c9, #c9c9c9) 4px 0 / 1px 100% no-repeat; }
  .nog .gb { background: none; }
  .g2 { width: 17px; background: linear-gradient(#c9c9c9, #c9c9c9) 3px 0 / 1px 100% no-repeat, linear-gradient(#c9c9c9, #c9c9c9) 3px 50% / 13px 1px no-repeat; }
  .last .g2 { background-size: 1px 50%, 13px 1px; }
  .pm { width: 9px; height: 9px; border: 1px solid #8d8d8d; background: linear-gradient(#555, #555) center / 5px 1px no-repeat #f4f4f4; }
  .pm.plus { background: linear-gradient(#4a4f78, #4a4f78) center / 5px 1px no-repeat, linear-gradient(#4a4f78, #4a4f78) center / 1px 5px no-repeat, #f4f4f4; }
  .strong { font-weight: 700; color: #4a4a4a; }
  .track { padding: 14px 0 0 7px; } .track i { display: block; width: 1.500px; height: 237px; background: #868686; }

  .center { width: 840px; flex: none; display: flex; flex-direction: column; background: #fff; height: 511px; margin-right: 4px; border-left: 1px solid #eee; }
  .vtabs { height: 18px; flex: none; display: flex; background: #c9c9c9; align-items: center; }
  .vt { width: 106px; padding-left: 4px; height: 18px; display: flex; align-items: center; gap: 5px; flex: none; color: #4a4a4a; }
  .vt:nth-child(3) { padding-left: 5px; }
  .vt.on { width: 105px; background: #fff; padding-left: 2px; padding-right: 1px; gap: 6px; color: #222; }
  .vt.on b { flex: 1; }
  .vtabs .more { margin-left: auto; margin-right: 2px; transform: scale(.85); }
  .canvas { height: 480px; flex: none; display: flex; }
  .scene { flex: none; display: block; }
  .vbar { flex: 1; background: #f0f0f0; }
  .cubetxt { font: 8px "Liberation Sans", sans-serif; fill: #999; }
  .hbar { flex: 1; margin-left: 293px; background: #f0f0f0; display: flex; align-items: center; }
  .hbar i { margin-left: 259px; width: 14px; height: 2px; background: #8a8a8a; }

  .properties { flex: 1; display: flex; flex-direction: column; background: #efefef; height: 512px; border-left: 1px solid #ddd; }
  .properties .head { padding-left: 1px; padding-right: 0; letter-spacing: -0.4px; }
  .type { height: 57px; flex: none; display: flex; align-items: center; padding: 0 3px 0 3px; border-top: 1px solid #ddd; }
  .thumb { width: 55px; height: 54px; border: 1px solid #d4d4d4; display: grid; place-items: center; margin-right: 3px; }
  .type .dd { margin-left: auto; }
  .inst { height: 21px; flex: none; display: flex; align-items: center; padding-left: 1px; }
  .combo { width: 167px; height: 17px; background: #fff; display: flex; align-items: center; padding: 0 4px 0 2px; justify-content: space-between; margin-right: 5px; }
  .chev { width: 5px; height: 5px; border: solid #888; border-width: 0 1px 1px 0; transform: rotate(45deg) translate(-1px, -1px); margin-left: auto; }
  .et { margin-left: 1px; }
  .gridbox { height: 398px; flex: none; display: flex; overflow: hidden; color: #222; letter-spacing: -0.5px; }
  .grid { width: 218px; flex: none; background: #fff; }
  .cat { height: 16px; background: #dadada; display: flex; justify-content: flex-end; align-items: center; padding: 0 3px 3px 0; }
  .prow { height: 16px; display: flex; border-bottom: 1px solid #cdcdcd; line-height: 15px; }
  .pl { width: 105px; border-right: 1px solid #bdbdbd; flex: none; }
  .pv { width: 103px; border-right: 1px solid #bdbdbd; padding-left: 1px; display: flex; align-items: center; }
  .pv.chk { padding-left: 2px; }
  .dim { color: #858585; }
  .pv.sel { border: 1px solid #222; padding-left: 3px; letter-spacing: -0.3px; }
  .pv.edit b { flex: 1; font-weight: 400; text-align: center; border: 1px solid #d8d8d8; border-radius: 2px; height: 14px; line-height: 12px; margin-right: 1px; }
  .pv i { width: 11px; height: 11px; border: 1px solid #8c8c8c; border-radius: 2px; }
  .px { flex: 1; padding: 0 1px 0 2px; } .px i { display: block; height: 15px; border: 1px solid #ccc; border-radius: 3px; }
  .ptrack { padding: 14px 0 0 7px; } .ptrack i { display: block; width: 1.500px; height: 228px; background: #868686; }
  .foot { flex: 1; display: flex; align-items: center; justify-content: space-between; padding-left: 65px; padding-right: 3px; }
  .two2 { color: #2a66c0; } .apply { width: 56px; height: 16px; background: #f8f8f8; text-align: center; color: #888; line-height: 15px; letter-spacing: -0.1px; }

  .status { height: 22px; flex: none; display: flex; align-items: center; background: #c9c9c9; color: #333; }
  .msg { width: 457px; padding-left: 2px; color: #222; letter-spacing: -0.5px; }
  .scombo { height: 15px; background: #fff; display: flex; align-items: center; justify-content: space-between; color: #858585; padding: 0 4px 0 2px; letter-spacing: -0.2px; }
  .c1 { width: 170px; margin-left: 7px; } .c2 { width: 169px; margin-left: 5px; }
  .s2 { margin-left: 5px; } .zero { width: 10px; margin-left: 2px; } .s3 { margin-left: 14px; } .s4 { margin-left: 5px; }
  .sr { margin-left: 209px; display: flex; gap: 5.500px; } .z2 { margin-left: 1px; }

  .taskbar { height: 39px; flex: none; display: flex; align-items: center; background: #cfe7eb; padding-bottom: 1px; }
  .weather { width: 135.500px; padding-left: 16px; position: relative; }
  .weather svg { display: block; }
  .weather b { position: absolute; left: 27px; top: -1px; width: 13px; height: 13px; border-radius: 50%; background: #c42b20; color: #fff; font-size: 9px; line-height: 13px; text-align: center; font-weight: 400; }
  .win { display: grid; grid-template: 9.500px 9.500px / 9.500px 9.500px; gap: 1px; width: 31.500px; }
  .win i { background: linear-gradient(135deg, #35b2ec, #0b74cb); }
  .search { width: 183px; height: 26px; border-radius: 13px; background: #f1fafb; display: flex; align-items: center; padding: 0 4px 0 9px; color: #555; font-size: 11.500px; letter-spacing: -0.4px; }
  .search span { margin-left: 8px; flex: 1; }
  .apps { display: flex; margin-left: .5px; }
  .app1 { width: 36.800px; height: 38px; display: flex; justify-content: center; align-items: center; position: relative; }
  .app1 .ic { width: 24px; }
  .app1.run::after { content: ""; position: absolute; bottom: 4px; width: 6px; height: 2px; border-radius: 1px; background: #6d7a7d; }
  .cad { position: absolute; bottom: 8px; color: #fff; font-size: 5px; line-height: 7px; font-weight: 700; letter-spacing: 0; }
  .zoomi { width: 20px; height: 20px; border-radius: 8px; background: #1264f5; color: #fff; font-size: 6.500px; line-height: 19px; text-align: center; font-weight: 400; letter-spacing: 0; }
  .zaloi { width: 20px; height: 20px; border-radius: 6px; background: #fbfdff; border: 1px solid #2b7de9; border-width: 0 0 1.500px 1px; color: #1566d6; font-size: 7.500px; line-height: 18px; text-align: center; font-weight: 700; letter-spacing: -0.3px; }
  .tray { flex: 1; display: flex; align-items: center; justify-content: flex-end; gap: 6px; padding-right: 17px; color: #222; }
  .clock { display: flex; flex-direction: column; text-align: right; line-height: 13px; width: 48px; padding-top: 1px; }
  .lang { margin-right: 9px; }

  .player { position: absolute; left: 901px; top: 229px; width: 211px; height: 491px; border-radius: 5px 5px 0 0; background: #b0b0b0; box-shadow: 0 0 22px rgba(0, 0, 0, .4); display: flex; flex-direction: column; overflow: hidden; font: 9px/11px Roboto, "Noto Sans", sans-serif; letter-spacing: -0.13px; color: #555; }
  .ph { height: 33px; flex: none; background: #17203c; color: #b9bfca; display: flex; align-items: center; padding: 0 3px 2px 5px; font-size: 11px; letter-spacing: 0.15px; }
  .pmin { margin-left: auto; width: 8px; height: 2px; background: #8590a6; margin-right: 7px; }
  .pt { height: 22px; flex: none; border-bottom: 1px solid #777; display: flex; align-items: center; padding: 0 4px; background: #b3b3b3; }
  .reload { margin-left: 7px; }
  .pq { margin-left: auto; width: 17px; height: 17px; border: 1px solid #444; border-radius: 50%; text-align: center; line-height: 15px; font-size: 12px; color: #333; }
  .script { display: flex; padding: 5px 0 0 4px; height: 35px; flex: none; }
  .sinfo { margin-left: 5px; display: flex; flex-direction: column; }
  .sname { font-size: 11px; line-height: 14px; color: #2d2d2d; letter-spacing: 0.1px; padding-top: 1px; }
  .sneed { display: flex; align-items: center; gap: 3px; color: #317cae; height: 12px; padding-left: 1px; letter-spacing: -0.16px; }
  .steps { display: flex; height: 108px; flex: none; }
  .rail { width: 37px; display: flex; flex-direction: column; align-items: center; }
  .dots { width: 2px; background: repeating-linear-gradient(#666 0 1px, transparent 1px 4px); }
  .dots.a { height: 8px; margin-top: 3px; } .dots.b { height: 40px; margin-top: 2px; }
  .node { width: 18px; height: 18px; border-radius: 50%; background: #a9a9a9; display: grid; place-items: center; margin-top: 1px; } .n2 { margin-top: 3px; }
  .fields p { margin: 0; }
  .q1 { padding-top: 12px; letter-spacing: -0.24px; } .fields .q2 { margin-top: 7px; letter-spacing: -0.3px; }
  .act { width: 87px; height: 18px; margin-top: 2px; background: #0a7db6; color: #a9d3e6; text-align: center; line-height: 18px; border-radius: 1px; box-shadow: 0 0 2px #0a7db6; }
  .w { padding-top: 3px; }
  .input { width: 86px; height: 17px; border: solid #777; border-width: 1px 0 0 1px; margin-top: 2px; line-height: 17px; }
  .toast { margin: 8px 6px 0; height: 81px; flex: none; background: #fff; border: 1.500px solid #888; border-radius: 6px; display: grid; place-items: center; padding-bottom: 2px; font-size: 8.500px; letter-spacing: .1px; color: #666; }
  .pf { margin-top: auto; height: 20px; background: #17203c; color: #b0b6c2; padding: 7px 5px 0; }
</style>
